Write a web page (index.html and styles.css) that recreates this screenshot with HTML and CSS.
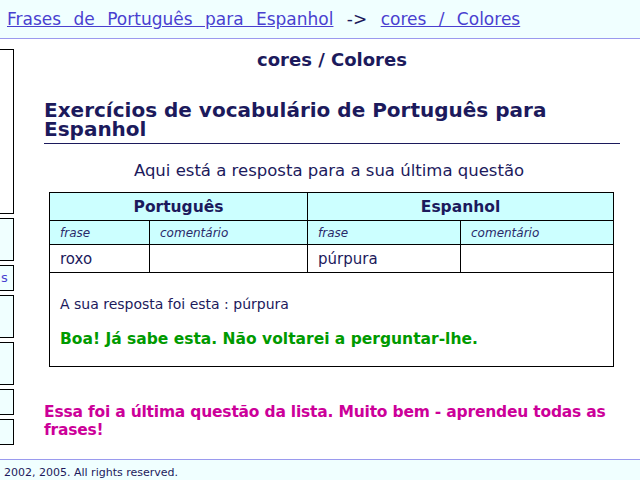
FILE: index.html
```html
<!DOCTYPE html>
<html lang="pt">

<head>
    <meta charset="UTF-8">
    <title>cores / Colores</title>
    <link rel="stylesheet" href="styles.css">
</head>

<body>
    <div class="topbar">
        <a href="#">Frases de Português para Espanhol</a>
        <span class="arrow">-&gt;</span>
        <a href="#">cores / Colores</a>
    </div>

    <div class="page">
        <nav class="sidebar">
            <div class="side-box side-big"></div>
            <div class="side-box side-mid"></div>
            <div class="side-box side-link"><a href="#">s</a></div>
            <div class="side-box side-mid"></div>
            <div class="side-box side-mid"></div>
            <div class="side-box side-small"></div>
            <div class="side-box side-small"></div>
        </nav>

        <section class="main">
            <h2 class="topic">cores / Colores</h2>
            <h1 class="title">Exercícios de vocabulário de Português para Espanhol</h1>
            <p class="intro">Aqui está a resposta para a sua última questão</p>

            <table class="answers">
                <tr class="lang-row">
                    <th colspan="2">Português</th>
                    <th colspan="2">Espanhol</th>
                </tr>
                <tr class="label-row">
                    <td class="c1">frase</td>
                    <td class="c2">comentário</td>
                    <td class="c3">frase</td>
                    <td class="c4">comentário</td>
                </tr>
                <tr class="word-row">
                    <td>roxo</td>
                    <td></td>
                    <td>púrpura</td>
                    <td></td>
                </tr>
                <tr class="result-row">
                    <td colspan="4">
                        <p class="your-answer">A sua resposta foi esta : púrpura</p>
                        <p class="good">Boa! Já sabe esta. Não voltarei a perguntar-lhe.</p>
                    </td>
                </tr>
            </table>

            <p class="finished">Essa foi a última questão da lista. Muito bem - aprendeu todas as frases!</p>
        </section>
    </div>

    <div class="footer">2002, 2005. All rights reserved.</div>
</body>

</html>
```
FILE: styles.css
```css
* {
    margin: 0;
    padding: 0;
    box-sizing: border-box;
}

body {
    font-family: "DejaVu Sans", Verdana, sans-serif;
    color: #1c1a5c;
    background: #ffffff;
}

.topbar {
    height: 39px;
    padding: 9px 7px 0;
    background: #f0ffff;
    border-bottom: 1px solid #9a9aee;
    font-size: 17px;
    word-spacing: 7px;
    color: #1c1a5c;
}

.topbar a {
    color: #4a3fd0;
}

.arrow {
    margin: 0 1px;
}

.page {
    display: flex;
    align-items: flex-start;
}

.sidebar {
    width: 14px;
    flex-shrink: 0;
    padding-top: 10px;
}

.side-box {
    border: 1px solid #000;
    border-left: none;
    background: #f0ffff;
    margin-bottom: 4px;
    padding-left: 1px;
}

.side-big {
    height: 165px;
    background: #ffffff;
}

.side-mid {
    height: 43px;
}

.side-link {
    height: 26px;
    padding-top: 4px;
    font-size: 13px;
}

.side-link a {
    color: #4a3fd0;
    text-decoration: none;
}

.side-small {
    height: 26px;
}

.main {
    flex: 1;
    margin: 0 20px 0 30px;
}

.topic {
    text-align: center;
    font-size: 18px;
    margin-top: 10px;
}

.title {
    font-size: 20px;
    line-height: 19px;
    margin-top: 31px;
    padding-bottom: 4px;
    border-bottom: 1px solid #1c1a5c;
}

.intro {
    text-align: center;
    font-size: 16.5px;
    margin: 17px 6px 0 0;
}

.answers {
    width: 565px;
    margin: 12px 0 0 5px;
    border-collapse: collapse;
    font-size: 14px;
}

.answers td,
.answers th {
    border: 1px solid #000;
    text-align: left;
    padding: 0 10px;
}

.lang-row th {
    background: #ccffff;
    text-align: center;
    height: 28px;
    font-size: 15.5px;
}

.label-row td {
    background: #ccffff;
    font-style: italic;
    font-size: 12px;
    height: 24px;
    color: #2a2a6a;
}

.c1 { width: 100px; }
.c2 { width: 158px; }
.c3 { width: 153px; }

.word-row td {
    height: 28px;
    font-size: 15px;
}

.result-row td {
    height: 94px;
    padding-top: 4px;
}

.your-answer {
    font-size: 14px;
    margin-bottom: 18px;
}

.good {
    color: #009a00;
    font-weight: bold;
    font-size: 15.5px;
}

.finished {
    color: #cc0099;
    font-weight: bold;
    font-size: 15.5px;
    letter-spacing: -0.2px;
    line-height: 18px;
    margin-top: 36px;
}

.footer {
    margin-top: 10px;
    background: #f0ffff;
    border-top: 1px solid #9a9aee;
    height: 22px;
    padding: 6px 4px 0;
    font-size: 11px;
}
```
